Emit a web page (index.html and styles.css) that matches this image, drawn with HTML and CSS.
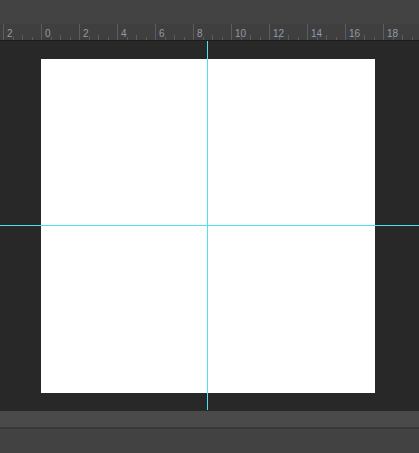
FILE: index.html
```html
<!DOCTYPE html>
<html lang="en">
<head>
    <meta charset="UTF-8">
    <title>Canvas</title>
    <link rel="stylesheet" href="styles.css">
</head>
<body>

    <!-- Top toolbar -->
    <div class="toolbar"></div>

    <!-- Horizontal ruler -->
    <div class="ruler">
        <div class="mark">2</div>
        <div class="mark">0</div>
        <div class="mark">2</div>
        <div class="mark">4</div>
        <div class="mark">6</div>
        <div class="mark">8</div>
        <div class="mark">10</div>
        <div class="mark">12</div>
        <div class="mark">14</div>
        <div class="mark">16</div>
        <div class="mark">18</div>
    </div>

    <!-- Canvas area -->
    <div class="workspace">
        <div class="page"></div>
        <div class="guide guide-v"></div>
        <div class="guide guide-h"></div>
    </div>

    <!-- Bottom bars -->
    <div class="statusbar"></div>
    <div class="footer"></div>

</body>
</html>
```

FILE: styles.css
```css
html, body {
    margin: 0;
    padding: 0;
    height: 100%;
    overflow: hidden;
}
body {
    display: flex;
    flex-direction: column;
    background-color: #424242;
    font-family: "Liberation Sans", Arial, sans-serif;
}
.toolbar {
    height: 24px;
    flex: none;
    background-color: #434343;
}
.ruler {
    height: 16px;
    flex: none;
    display: flex;
    padding-left: 3px;
    background-color: #3f3f3f;
    border-bottom: 1px solid #1c1c1c;
    overflow: hidden;
}
.mark {
    flex: none;
    width: 37px;
    border-left: 1px solid #5c5c5c;
    padding: 5px 0 0 3px;
    box-sizing: border-box;
    width: 38px;
    font-size: 10px;
    line-height: 10px;
    color: #8e9cab;
    background-image:
        linear-gradient(#5c5c5c, #5c5c5c),
        linear-gradient(#5c5c5c, #5c5c5c),
        linear-gradient(#5c5c5c, #5c5c5c);
    background-size: 1px 3px, 1px 5px, 1px 3px;
    background-position: 9px 100%, 18px 100%, 28px 100%;
    background-repeat: no-repeat;
}
.workspace {
    position: relative;
    height: 370px;
    flex: none;
    background-color: #282828;
    padding: 18px 0 0 41px;
    box-sizing: border-box;
}
.page {
    width: 334px;
    height: 334px;
    background-color: #fff;
}
.guide {
    position: absolute;
    background-color: #4fe3ee;
}
.guide-v {
    left: 207px;
    top: 0;
    bottom: 1px;
    width: 1px;
}
.guide-h {
    left: 0;
    right: 0;
    top: 184px;
    height: 1px;
}
.statusbar {
    height: 16px;
    flex: none;
    background-color: #4a4a4a;
    border-bottom: 2px solid #383838;
}
.footer {
    flex: 1;
    background-color: #424242;
}
```
